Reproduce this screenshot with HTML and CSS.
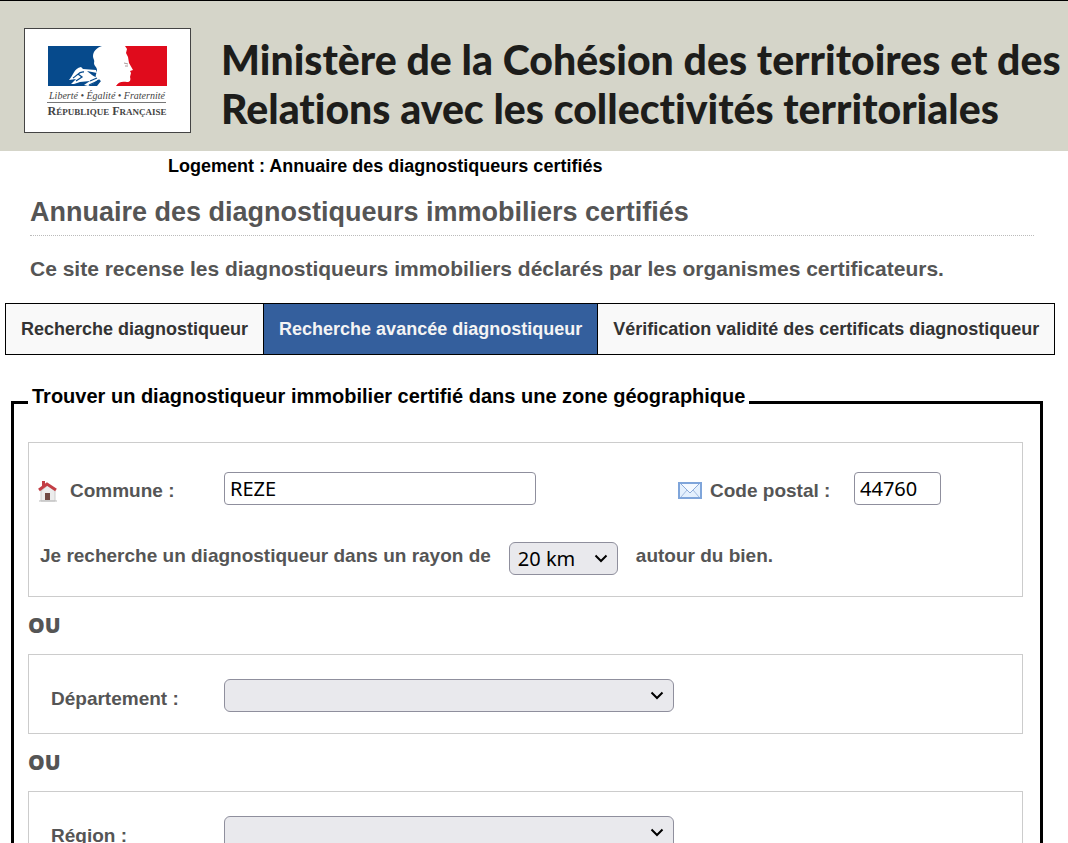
FILE: index.html
```html
<!DOCTYPE html>
<html lang="fr">
<head>
    <meta charset="UTF-8">
    <meta name="viewport" content="width=device-width, initial-scale=1.0">
    <title>Annuaire des diagnostiqueurs immobiliers certifiés</title>
    <link rel="stylesheet" href="styles.css">
</head>
<body>
    <header class="banner">
        <svg class="logo" viewBox="0 0 167 105" role="img" aria-label="République Française">
            <rect x="0.5" y="0.5" width="166" height="104" fill="#fff" stroke="#444"/>
            <path d="M24 18H78C72 20 69 24 69 28C69 31 71 32 70 35C70 38 73 39 73 42C73 45 71 47 72 50L77 53L73 58H24Z" fill="#064a8c"/>
            <path d="M101 18H143V58H92C94 54 98 53 103 54C106 54 107 52 106 49L107 45L106 43L109 42L105 35L104 29L102 25L103 21Z" fill="#e00b1c"/>
            <path d="M100 35L104 36M101 38H104" stroke="#a99" fill="none"/>
            <!-- Marianne's collar -->
            <path d="M45 52C49 48 50 40 57 39L59 41L72 42L73 45L63 43C68 47 71 50 76 50L70 55L64 58L60 57L66 53L56 54L50 56H47L52 51Z" fill="#fff"/>
            <path d="M49 50C53 48 55 43 60 44M52 53L58 49L54 46M66 53L73 50M65 57L76 52" fill="none" stroke="#064a8c" stroke-width="1.3"/>
            <text class="logo-motto" x="83" y="71" text-anchor="middle">Liberté • Égalité • Fraternité</text>
            <path d="M23 74.500H142" stroke="#777"/>
            <text class="logo-name" x="83" y="87" text-anchor="middle">R<tspan class="small">ÉPUBLIQUE</tspan> F<tspan class="small">RANÇAISE</tspan></text>
        </svg>
        <div class="ministry">Ministère de la Cohésion des territoires et des<br>Relations avec les collectivités territoriales</div>
    </header>

    <p class="breadcrumb">Logement : Annuaire des diagnostiqueurs certifiés</p>

    <div class="intro">
        <h1>Annuaire des diagnostiqueurs immobiliers certifiés</h1>
        <p>Ce site recense les diagnostiqueurs immobiliers déclarés par les organismes certificateurs.</p>
    </div>

    <nav class="tabs">
        <a href="#">Recherche diagnostiqueur</a>
        <a href="#" class="active">Recherche avancée diagnostiqueur</a>
        <a href="#">Vérification validité des certificats diagnostiqueur</a>
    </nav>

    <form>
        <fieldset>
            <legend>Trouver un diagnostiqueur immobilier certifié dans une zone géographique</legend>

            <!-- Recherche par commune -->
            <div class="zone zone-commune">
                <div class="row">
                    <label for="commune" class="with-icon">
                        <svg class="icon" viewBox="0 0 20 22" aria-hidden="true">
                            <path d="M3 11L10 5L17 11V21H3Z" fill="#ececec" stroke="#ccc"/>
                            <path d="M1 21H19" stroke="#bbb"/>
                            <path d="M4 7V1H7V5" fill="#c33e45"/>
                            <path d="M1 10L9 4L18 10" fill="none" stroke="#c33e45" stroke-width="3"/>
                            <rect x="7" y="13" width="5" height="7" fill="#704842"/>
                        </svg>
                        Commune :
                    </label>
                    <input type="text" id="commune" value="REZE">
                    <label for="cp" class="with-icon mail">
                        <svg class="icon-mail" viewBox="0 0 24 17" aria-hidden="true">
                            <rect x="1" y="1" width="22" height="15" fill="#e4f0fd" stroke="#7fa5da" stroke-width="2"/>
                            <path d="M3 15L9 8M21 15L15 8" stroke="#a3bce0" fill="none"/>
                            <path d="M3 2L12 11L21 2" fill="#f4f9ff" stroke="#8dabd8"/>
                        </svg>
                        Code postal :
                    </label>
                    <input type="text" id="cp" class="cp" value="44760">
                </div>
                <div class="radius">
                    <label for="rayon">Je recherche un diagnostiqueur dans un rayon de</label>
                    <select id="rayon">
                        <option>10 km</option>
                        <option selected>20 km</option>
                        <option>50 km</option>
                    </select>
                    <span>autour du bien.</span>
                </div>
            </div>

            <h2>OU</h2>

            <div class="zone row">
                <label for="departement">Département :</label>
                <select id="departement"><option></option></select>
            </div>

            <h2>OU</h2>

            <div class="zone row">
                <label for="region">Région :</label>
                <select id="region"><option></option></select>
            </div>
        </fieldset>
    </form>
</body>
</html>
```
FILE: styles.css
```css
* {
    box-sizing: border-box;
}

body {
    margin: 0;
    font-family: "Liberation Sans", Arial, sans-serif;
    font-weight: bold;
    color: #555;
    background-color: #fff;
}

.banner {
    display: flex;
    align-items: flex-start;
    gap: 30px;
    padding: 27px 0 18px 24px;
    border-top: 1px solid #000;
    background-color: #d5d5c9;
    overflow: hidden;
}

.logo {
    flex: none;
    width: 167px;
    height: 105px;
}

.logo-motto {
    font: italic 10px "Liberation Serif", serif;
    fill: #444;
}

.logo-name {
    font: bold 12px "Liberation Serif", serif;
    fill: #444;
}

.logo-name .small {
    font-size: 9px;
}

.ministry {
    padding-top: 7px;
    font-family: Lato, sans-serif;
    font-size: 41px;
    font-weight: 900;
    font-variant-ligatures: none;
    line-height: 49px;
    color: #1d1d1b;
    white-space: nowrap;
}

.breadcrumb {
    margin: 4px 0 0 168px;
    font-size: 18px;
    line-height: 22px;
    color: #000;
}

.intro {
    margin: 19px 34px 0 30px;
}

.intro h1 {
    margin: 0;
    padding-bottom: 7px;
    font-size: 27px;
    line-height: 32px;
    border-bottom: 1px dotted #bbb;
}

.intro p {
    margin: 20px 0 0;
    font-size: 21px;
    line-height: 26px;
}

.tabs {
    display: flex;
    margin: 21px 13px 0 5px;
    border: 1px solid #000;
    background-color: #f9f9f9;
}

.tabs a {
    padding: 0 15px;
    font-size: 18px;
    line-height: 50px;
    color: #333;
    text-decoration: none;
    white-space: nowrap;
}

.tabs a + a {
    border-left: 1px solid #000;
}

.tabs .active {
    background-color: #345f9d;
    color: #f4f4f4;
}

fieldset {
    margin: 30px 25px 20px 11px;
    padding: 22px 17px 20px 14px;
    border: 3px solid #000;
}

legend {
    padding: 0 4px 13px;
    font-size: 20px;
    line-height: 22px;
    color: #000;
}

.zone {
    font-size: 19px;
    border: 1px solid #ccc;
}

.zone-commune {
    padding: 29px 0 21px;
}

.row {
    display: grid;
    grid-template-columns: 195px 450px 180px auto;
    align-items: center;
    justify-content: start;
}

.zone.row {
    padding: 24px 0 21px;
}

.zone > label {
    padding: 6px 0 0 22px;
}

.with-icon {
    display: flex;
    align-items: center;
    gap: 12px;
    padding: 4px 0 0 9px;
}

.with-icon.mail {
    gap: 8px;
    padding-left: 4px;
}

.with-icon + .cp {
    width: 87px;
}

.icon {
    width: 20px;
    height: 22px;
}

.icon-mail {
    width: 24px;
    height: 17px;
}

.radius {
    display: flex;
    gap: 18px;
    padding: 37px 0 0 11px;
    line-height: 28px;
}

input, select {
    height: 33px;
    padding: 0 5px;
    font-family: "Noto Sans", sans-serif;
    font-size: 20px;
    color: #000;
    border: 1px solid #8f8f9d;
    border-radius: 4px;
}

input {
    width: 312px;
}

select {
    appearance: none;
    padding: 0 36px 0 8px;
    border-radius: 6px;
    background: #e9e9ed url("data:image/svg+xml,%3Csvg xmlns='http://www.w3.org/2000/svg' width='14' height='9'%3E%3Cpath d='M1.500 1.500L7 7L12.500 1.500' fill='none' stroke='black' stroke-width='2'/%3E%3C/svg%3E") no-repeat right 9px center;
}

#rayon {
    width: 109px;
}

h2 {
    margin: 0;
    font-family: "Noto Sans", sans-serif;
    font-size: 21px;
    font-weight: 900;
    line-height: 57px;
}
```
